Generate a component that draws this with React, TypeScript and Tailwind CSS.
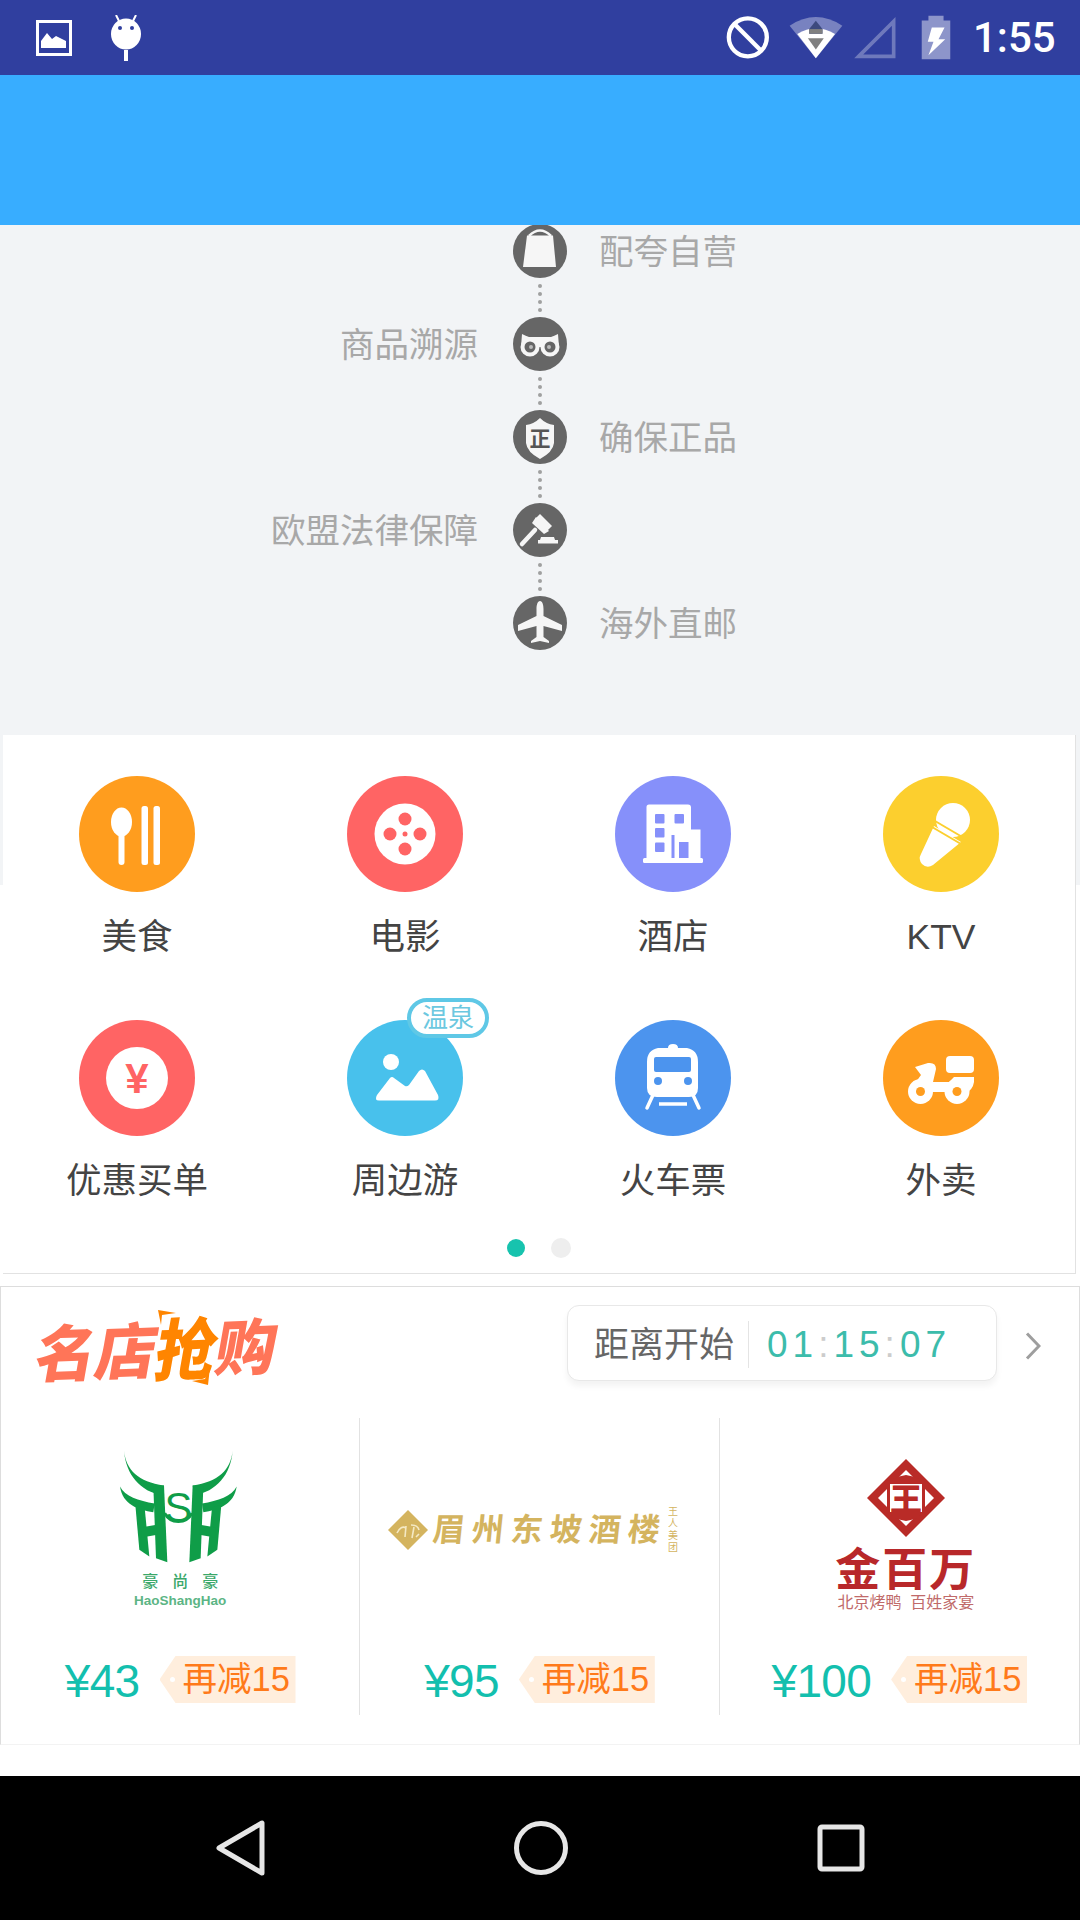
const categories = [
  { name: "美食", icon: <FoodIcon /> },
  { name: "电影", icon: <FilmIcon /> },
  { name: "酒店", icon: <HotelIcon /> },
  { name: "KTV", icon: <MicIcon /> },
  { name: "优惠买单", icon: <YenIcon /> },
  { name: "周边游", icon: <TripIcon />, badge: "温泉" },
  { name: "火车票", icon: <TrainIcon /> },
  { name: "外卖", icon: <ScooterIcon /> },
]

const steps = [
  { right: "配夸自营", icon: <BagIcon /> },
  { left: "商品溯源", icon: <OwlIcon /> },
  { right: "确保正品", icon: <ShieldIcon /> },
  { left: "欧盟法律保障", icon: <HammerIcon /> },
  { right: "海外直邮", icon: <PlaneIcon /> },
]

function FoodIcon() {
  return (
    <svg viewBox="0 0 116 116" className="w-[116px] h-[116px]">
      <circle cx="58" cy="58" r="58" fill="#ff9d1e" />
      <ellipse cx="42.5" cy="46" rx="10.5" ry="14.5" fill="#fff" />
      <rect x="39.5" y="50" width="6" height="39" rx="3" fill="#fff" />
      <rect x="62.5" y="30" width="6.5" height="59" rx="2.5" fill="#fff" />
      <rect x="74.5" y="30" width="6.5" height="59" rx="2.5" fill="#fff" />
    </svg>
  )
}

function FilmIcon() {
  return (
    <svg viewBox="0 0 116 116" className="w-[116px] h-[116px]">
      <circle cx="58" cy="58" r="58" fill="#ff6464" />
      <circle cx="58" cy="58" r="30.5" fill="#fff" />
      <circle cx="58" cy="43" r="6.5" fill="#ff6464" />
      <circle cx="58" cy="73" r="6.5" fill="#ff6464" />
      <circle cx="43" cy="58" r="6.5" fill="#ff6464" />
      <circle cx="73" cy="58" r="6.5" fill="#ff6464" />
      <circle cx="58" cy="58" r="2.5" fill="#ff6464" />
    </svg>
  )
}

function HotelIcon() {
  return (
    <svg viewBox="0 0 116 116" className="w-[116px] h-[116px]">
      <circle cx="58" cy="58" r="58" fill="#8690fa" />
      <path d="M34 28.5H73a3 3 0 0 1 3 3V53.5H85.5V82H31.5V31a2.5 2.5 0 0 1 2.5-2.5Z" fill="#fff" />
      <rect x="28" y="82" width="60" height="5" rx="1.5" fill="#fff" />
      <rect x="40" y="38" width="9.5" height="9.500" rx="1" fill="#8690fa" />
      <rect x="59.5" y="38" width="9.5" height="9.500" rx="1" fill="#8690fa" />
      <rect x="40" y="52" width="9.5" height="9.500" rx="1" fill="#8690fa" />
      <rect x="40" y="66.5" width="9.5" height="9.500" rx="1" fill="#8690fa" />
      <rect x="64" y="66" width="9.5" height="16" fill="#8690fa" />
      <rect x="56.500" y="59" width="3" height="23" fill="#8690fa" />
    </svg>
  )
}

function MicIcon() {
  return (
    <svg viewBox="0 0 116 116" className="w-[116px] h-[116px]">
      <circle cx="58" cy="58" r="58" fill="#fccf2e" />
      <circle cx="70" cy="44" r="17" fill="#fff" />
      <path d="M51 50 L78 66 L50 89 Q44 93 39 88 Q35 83 38 78 Z" fill="#fff" />
      <path d="M52 45 L81 62" stroke="#fccf2e" strokeWidth="2" />
      <path d="M49 51 L78 68" stroke="#fccf2e" strokeWidth="2" />
    </svg>
  )
}

function YenIcon() {
  return (
    <svg viewBox="0 0 116 116" className="w-[116px] h-[116px]">
      <circle cx="58" cy="58" r="58" fill="#ff6464" />
      <circle cx="58" cy="58" r="31" fill="#fff" />
      <text x="58" y="73" textAnchor="middle" fontSize="42" fontWeight="700" fontFamily="Liberation Sans" fill="#ff6464">¥</text>
    </svg>
  )
}

function TripIcon() {
  return (
    <svg viewBox="0 0 116 116" className="w-[116px] h-[116px]">
      <circle cx="58" cy="58" r="58" fill="#48c1ec" />
      <circle cx="44" cy="42" r="8" fill="#fff" />
      <path d="M32 80.5 Q27 80.5 30 75 L43 58 Q45 56 47 58 L58 66 Q60 67 62 65 L72 51 Q75 48 78 51 L91 75 Q93 80.5 88 80.5 Z" fill="#fff" />
    </svg>
  )
}

function TrainIcon() {
  return (
    <svg viewBox="0 0 116 116" className="w-[116px] h-[116px]">
      <circle cx="58" cy="58" r="58" fill="#4c94ee" />
      <path d="M53 28 Q53 24 58 24 Q63 24 63 28 H72 Q83 30 83 42 V68 Q83 77 74 77 H42 Q32 77 32 68 V42 Q32 30 43 28 Z" fill="#fff" />
      <rect x="39" y="37" width="37" height="15" rx="2" fill="#4c94ee" />
      <circle cx="43" cy="61" r="4" fill="#4c94ee" />
      <circle cx="73" cy="61" r="4" fill="#4c94ee" />
      <path d="M38 75 L32 88 M78 75 L84 88" stroke="#fff" strokeWidth="3.5" strokeLinecap="round" />
      <path d="M44 84 H72" stroke="#fff" strokeWidth="3.5" />
    </svg>
  )
}

function ScooterIcon() {
  return (
    <svg viewBox="0 0 116 116" className="w-[116px] h-[116px]">
      <circle cx="58" cy="58" r="58" fill="#ff9d1e" />
      <rect x="63" y="36" width="28" height="17" rx="4" fill="#fff" />
      <path d="M32 47 L45 43 Q53 42 53 49 L50 62 H66 L71 57 H91 Q92 67 85 72 H36 L30 66 L38 55 Z" fill="#fff" />
      <circle cx="37.5" cy="71.5" r="12.5" fill="#fff" />
      <circle cx="74" cy="71.5" r="12.5" fill="#fff" />
      <circle cx="37.5" cy="71.5" r="4.5" fill="#ff9d1e" />
      <circle cx="74" cy="71.5" r="4.5" fill="#ff9d1e" />
    </svg>
  )
}

function BagIcon() {
  return (
    <svg viewBox="0 0 54 54" className="w-[54px] h-[54px]">
      <circle cx="27" cy="27" r="27" fill="#666" />
      <path d="M16 12 Q27 1 38 12" stroke="#f6f6f6" strokeWidth="2.5" fill="none" />
      <path d="M14 11.5 H40 L43 43 H10 Z" fill="#f6f6f6" />
    </svg>
  )
}

function OwlIcon() {
  return (
    <svg viewBox="0 0 54 54" className="w-[54px] h-[54px]">
      <circle cx="27" cy="27" r="27" fill="#666" />
      <path d="M9 17 Q13 19 16 20 H38 Q41 19 45 17 L46 30 H8 Z" fill="#f6f6f6" />
      <circle cx="17" cy="30" r="9.5" fill="#f6f6f6" />
      <circle cx="37" cy="30" r="9.5" fill="#f6f6f6" />
      <circle cx="17" cy="30" r="5.5" fill="#666" />
      <circle cx="37" cy="30" r="5.5" fill="#666" />
      <circle cx="18" cy="30" r="2" fill="#bbb" />
      <circle cx="36" cy="30" r="2" fill="#bbb" />
    </svg>
  )
}

function ShieldIcon() {
  return (
    <svg viewBox="0 0 54 54" className="w-[54px] h-[54px]">
      <circle cx="27" cy="27" r="27" fill="#666" />
      <path d="M27 8 Q33 14 41 15 V33 Q40 42 27 49 Q14 42 13 33 V15 Q21 14 27 8 Z" fill="#f6f6f6" />
      <text x="27" y="36" textAnchor="middle" fontSize="21" fontWeight="700" fontFamily="Noto Sans CJK SC" fill="#555">正</text>
    </svg>
  )
}

function HammerIcon() {
  return (
    <svg viewBox="0 0 54 54" className="w-[54px] h-[54px]">
      <circle cx="27" cy="27" r="27" fill="#666" />
      <path d="M9 41 L22 27" stroke="#f6f6f6" strokeWidth="4.5" strokeLinecap="round" />
      <path d="M22 16 L27 11 L39 23 L34 28 Z" fill="#f6f6f6" />
      <path d="M19 20 L23 14 L36 28 L31 31 Z" fill="#f6f6f6" />
      <rect x="25" y="37" width="20" height="3.5" fill="#f6f6f6" />
      <path d="M28 34 H41 L42 37 H27 Z" fill="#f6f6f6" />
    </svg>
  )
}

function PlaneIcon() {
  return (
    <svg viewBox="0 0 54 54" className="w-[54px] h-[54px]">
      <circle cx="27" cy="27" r="27" fill="#666" />
      <path d="M27 5 C29.5 5 30.5 9 30.5 13 V20 L49 29 V35 L30.5 30 V41 L36 45 V47 L27 45 L18 47 V45 L23.500 41 V30 L5 35 V29 L23.500 20 V13 C23.500 9 24.500 5 27 5 Z" fill="#f6f6f6" />
    </svg>
  )
}

function BullLogo() {
  const half = (
    <g fill="#0f9d48">
      <path d="M42 28 C48 85 85 122 162 132 L158 162 C90 150 48 100 42 28 Z" />
      <path d="M30 135 C45 165 85 178 134 186 L130 212 C85 205 38 190 30 135 Z" />
      <path d="M130 135 L162 132 L172 362 L138 350 Z" />
      <path d="M76 190 L104 198 L118 345 L88 325 Z" />
      <path d="M92 258 L140 250 L142 280 L95 288 Z" />
    </g>
  )
  return (
    <svg viewBox="0 20 420 350" className="w-[140px] h-[117px]">
      {half}
      <g transform="translate(410,0) scale(-1,1)">{half}</g>
      <path d="M164 215 A46 46 0 0 0 246 215" stroke="#0f9d48" strokeWidth="9" fill="none" />
      <text x="205" y="241" textAnchor="middle" fontSize="125" fontFamily="Liberation Sans" fill="#0f9d48">S</text>
    </svg>
  )
}

function GoldDiamond() {
  return (
    <svg viewBox="0 0 40 40" className="w-[40px] h-[40px] shrink-0">
      <path d="M20 0 L40 20 L20 40 L0 20 Z" fill="#d4b45f" />
      <path d="M9 23 Q13 15 18 18 M17 27 L18 16 M23 15 Q30 15 31 20 M24 28 L26 17 M28 27 L31 24" stroke="#f4e9c4" strokeWidth="1.6" fill="none" />
    </svg>
  )
}

function RedDiamond() {
  return (
    <svg viewBox="0 0 78 78" className="w-[78px] h-[78px]">
      <path d="M39 0 L78 39 L39 78 L0 39 Z" fill="#b92b27" />
      <path d="M39 11 L67 39 L39 67 L11 39 Z" fill="#fff" />
      <path d="M39 16 Q51 18 58 25 V53 Q51 60 39 62 Q27 60 20 53 V25 Q27 18 39 16 Z" fill="#b92b27" />
      <rect x="23" y="25" width="32" height="28" fill="#fff" />
      <text x="39" y="52" textAnchor="middle" fontSize="32" fontWeight="900" fontFamily="Noto Sans CJK SC" fill="#b92b27">王</text>
    </svg>
  )
}

function Tag() {
  return (
    <div className="flex items-center w-[136px] h-[47px] pl-[10px] bg-[#ffeedd] [clip-path:polygon(0_50%,16px_0,100%_0,100%_100%,16px_100%)]">
      <div className="w-[5px] h-[5px] rounded-full bg-white"></div>
      <div className="ml-[8px] text-[34.5px] leading-none text-[#ff7a1a] whitespace-nowrap">再减15</div>
    </div>
  )
}

function Price({ value }: { value: string }) {
  return (
    <div className="flex items-center justify-center gap-[20px] h-[47px]">
      <div className="pt-[2px] text-[46px] leading-none tracking-[-0.7px] text-[#13bfae]">¥{value}</div>
      <Tag />
    </div>
  )
}

function App() {
  return (
    <div className="flex flex-col w-[1080px] h-[1920px] bg-white overflow-hidden font-['Liberation_Sans','Noto_Sans_CJK_SC',sans-serif]">
      {/* status bar */}
      <div className="flex items-center h-[75px] shrink-0 bg-[#303f9f] pr-[25px]">
        <svg viewBox="0 0 36 36" className="w-[36px] h-[36px] ml-[36px]">
          <rect x="1.500" y="1.500" width="33" height="33" fill="none" stroke="#fff" strokeWidth="3" />
          <path d="M5 28 V21 L11 13 L16 19 L20 16 L30 21 V28 Z" fill="#fff" />
        </svg>
        <svg viewBox="0 0 32 46" className="w-[32px] h-[46px] ml-[38px]">
          <path d="M6 0 L9 6 M26 0 L23 6" stroke="#fff" strokeWidth="2" />
          <ellipse cx="16" cy="19" rx="15" ry="15.500" fill="#fff" />
          <circle cx="10" cy="13" r="2" fill="#303f9f" />
          <circle cx="22" cy="13" r="2" fill="#303f9f" />
          <rect x="14" y="35" width="4" height="11" fill="#fff" />
        </svg>
        <svg viewBox="20 30 140 135" className="w-[47px] h-[45px] ml-auto">
          <circle cx="88" cy="97" r="57" fill="none" stroke="#fff" strokeWidth="13" />
          <path d="M48 57 L128 137" stroke="#fff" strokeWidth="13" />
        </svg>
        <svg viewBox="205 30 175 135" className="w-[58px] h-[45px] ml-[15px]">
          <path d="M213 62 Q292 10 372 62 L292 160 Z" fill="#fff" fillOpacity="0.35" />
          <path d="M236 87 Q292 52 350 87 L292 160 Z" fill="#fff" />
          <path d="M292 47 L312 72 V86 H272 V72 Z" fill="#3d4a7e" />
          <path d="M272 72 H312 V86 H272 Z" fill="#808080" />
          <path d="M268 100 H316 L292 134 Z" fill="#808080" />
        </svg>
        <svg viewBox="405 30 135 135" className="w-[45px] h-[45px] ml-[8px]">
          <path d="M422 154 L527 49 V154 Z" fill="none" stroke="#fff" strokeOpacity="0.3" strokeWidth="11" />
        </svg>
        <svg viewBox="605 25 95 140" className="w-[32px] h-[47px] ml-[22px]">
          <path d="M630 30 H675 V44 H695 V160 H610 V44 H630 Z" fill="#fff" fillOpacity="0.45" />
          <path d="M640 65 H678 L660 100 H680 L630 148 L645 108 H628 Z" fill="#fff" />
        </svg>
        <div className="ml-[21px] w-[82px] text-[42px] leading-none font-medium text-white whitespace-nowrap font-['Roboto',sans-serif]">1:55</div>
      </div>

      {/* toolbar */}
      <div className="h-[150px] shrink-0 bg-[#38adff]"></div>

      {/* timeline */}
      <div className="h-[510px] shrink-0 overflow-hidden bg-[#f2f4f6]">
        <div className="flex flex-col -mt-px">
          {steps.map((step, i) => (
            <div key={i}>
              <div className="grid grid-cols-[1fr_54px_1fr] items-center h-[54px] text-[34.5px] leading-none text-[#a8a8a8]">
                <div className="text-right pr-[35px] pt-[2px]">{step.left}</div>
                {step.icon}
                <div className="pl-[32px] pt-[2px]">{step.right}</div>
              </div>
              {i < steps.length - 1 && (
                <div className="flex flex-col items-center justify-center gap-[4px] h-[39px]">
                  <div className="w-[4px] h-[4px] rounded-full bg-[#a0a0a0]"></div>
                  <div className="w-[4px] h-[4px] rounded-full bg-[#a0a0a0]"></div>
                  <div className="w-[4px] h-[4px] rounded-full bg-[#a0a0a0]"></div>
                  <div className="w-[4px] h-[4px] rounded-full bg-[#a0a0a0]"></div>
                </div>
              )}
            </div>
          ))}
        </div>
      </div>

      {/* category card, the grey page shows beside it for the first 150px */}
      <div className="h-[539px] shrink-0 pl-[3px] pr-[4px] bg-[linear-gradient(#f2f4f6_150px,#ffffff_150px)]">
        <div className="flex flex-col h-full bg-white border-r border-b border-[#e2e2e2] pt-[41px]">
          <div className="grid grid-cols-4 gap-y-[63px]">
            {categories.map((item) => (
              <div key={item.name} className="flex flex-col items-center">
                <div className="relative w-[116px] h-[116px]">
                  {item.icon}
                  {item.badge && (
                    <div className="absolute left-[60px] top-[-22px] flex items-center justify-center w-[82px] h-[40px] rounded-full bg-white border-[4px] border-[#5fc8e6] text-[26px] leading-none text-[#6cc8e0]">
                      {item.badge}
                    </div>
                  )}
                </div>
                <div className="mt-[25px] h-[40px] text-[35.5px] leading-[40px] text-[#444]">{item.name}</div>
              </div>
            ))}
          </div>
          <div className="flex items-center justify-center gap-[26px] mt-[37px]">
            <div className="w-[18px] h-[18px] rounded-full bg-[#17c3ae]"></div>
            <div className="w-[20px] h-[20px] rounded-full bg-[#eeeeee]"></div>
          </div>
        </div>
      </div>

      {/* flash sale */}
      <div className="flex flex-col h-[459px] mt-[12px] shrink-0 border border-t-[#dddddd] border-x-[#dddddd] border-b-[#f3f3f3]">
        <div className="flex items-start h-[131px] pt-[18px]">
          <div className="relative w-[239px] h-[78px] ml-[36px] mt-[2px]">
            <div className="flex items-center h-full -skew-x-12 -rotate-2 whitespace-nowrap text-[61px] leading-none font-black text-[#ff7558] font-['Noto_Sans_CJK_SC',sans-serif] tracking-[-1px]">
              <span>名店</span>
              <span className="inline-block scale-y-110 text-[#ff8500]">抢</span>
              <span>购</span>
            </div>
            <svg viewBox="0 0 239 78" className="absolute inset-0 w-[239px] h-[78px]">
              <path d="M121 3 L139 6 L125 8 L124 18 Z" fill="#ff8500" />
              <path d="M173 60 L171 78 L155 74 L168 72 Z" fill="#ff8500" />
            </svg>
          </div>
          <div className="flex items-center w-[430px] h-[76px] ml-[291px] pl-[26px] pt-[2px] rounded-[12px] bg-white border border-[#e8e8e8] shadow-[0_5px_6px_rgba(0,0,0,0.05)]">
            <div className="text-[35px] leading-none text-[#666] whitespace-nowrap">距离开始</div>
            <div className="w-px h-[47px] mx-[14px] bg-[#e4e4e4]"></div>
            <div className="flex ml-[4px] text-[37px] leading-none tracking-[5px] text-[#3cbcab]">
              01<span className="text-[#cccccc]">:</span>15<span className="text-[#cccccc]">:</span>07
            </div>
          </div>
          <svg viewBox="0 0 16 28" className="w-[16px] h-[28px] ml-[28px] mt-[27px]">
            <path d="M2 1.500 L14 14 L2 26.500" fill="none" stroke="#9e9e9e" strokeWidth="3" />
          </svg>
        </div>

        <div className="grid grid-cols-3 h-[297px]">
          <div className="flex flex-col border-r border-[#e2e2e2]">
            <div className="flex flex-col items-center justify-center h-[224px] mb-[14px] pb-[5px]">
              <BullLogo />
              <div className="mt-[9px] text-[16px] leading-[16px] font-medium tracking-[14px] pl-[14px] text-[#3aa86a]">豪尚豪</div>
              <div className="mt-[5px] text-[13.5px] leading-[12px] font-bold text-[#5cb585]">HaoShangHao</div>
            </div>
            <Price value="43" />
          </div>
          <div className="flex flex-col border-r border-[#e2e2e2]">
            <div className="flex items-center justify-center h-[224px] mb-[14px] pr-[14px]">
              <GoldDiamond />
              <div className="ml-[5px] -skew-x-6 text-[32px] leading-none tracking-[7px] font-bold text-[#d4b45f] whitespace-nowrap">眉州东坡酒楼</div>
              <div className="ml-[-1px] [writing-mode:vertical-rl] text-[10px] leading-[10px] tracking-[2px] text-[#d4b45f]">王人美团</div>
            </div>
            <Price value="95" />
          </div>
          <div className="flex flex-col">
            <div className="flex flex-col items-center justify-center h-[224px] mb-[14px] pt-[10px] pl-[13px]">
              <RedDiamond />
              <div className="mt-[7px] text-[45px] leading-[46px] font-bold tracking-[2px] text-[#b8282a] font-['Noto_Sans_CJK_SC',sans-serif]">金百万</div>
              <div className="mt-[5px] text-[16px] leading-[16px] text-[#c06a6a] whitespace-nowrap">北京烤鸭&nbsp;&nbsp;百姓家宴</div>
            </div>
            <Price value="100" />
          </div>
        </div>
      </div>

      {/* white strip above nav */}
      <div className="flex-1"></div>

      {/* nav bar */}
      <div className="flex items-center justify-center gap-[249px] h-[144px] shrink-0 bg-black">
        <svg viewBox="0 0 49 56" className="w-[49px] h-[56px]">
          <path d="M46 3 V53 L3 28 Z" fill="none" stroke="#e6e6e6" strokeWidth="5" strokeLinejoin="round" />
        </svg>
        <svg viewBox="0 0 54 54" className="w-[54px] h-[54px]">
          <circle cx="27" cy="27" r="24.500" fill="none" stroke="#e6e6e6" strokeWidth="5" />
        </svg>
        <svg viewBox="0 0 48 48" className="w-[48px] h-[48px]">
          <rect x="3" y="3" width="42" height="42" rx="2" fill="none" stroke="#e6e6e6" strokeWidth="5" />
        </svg>
      </div>
    </div>
  )
}

export default App
